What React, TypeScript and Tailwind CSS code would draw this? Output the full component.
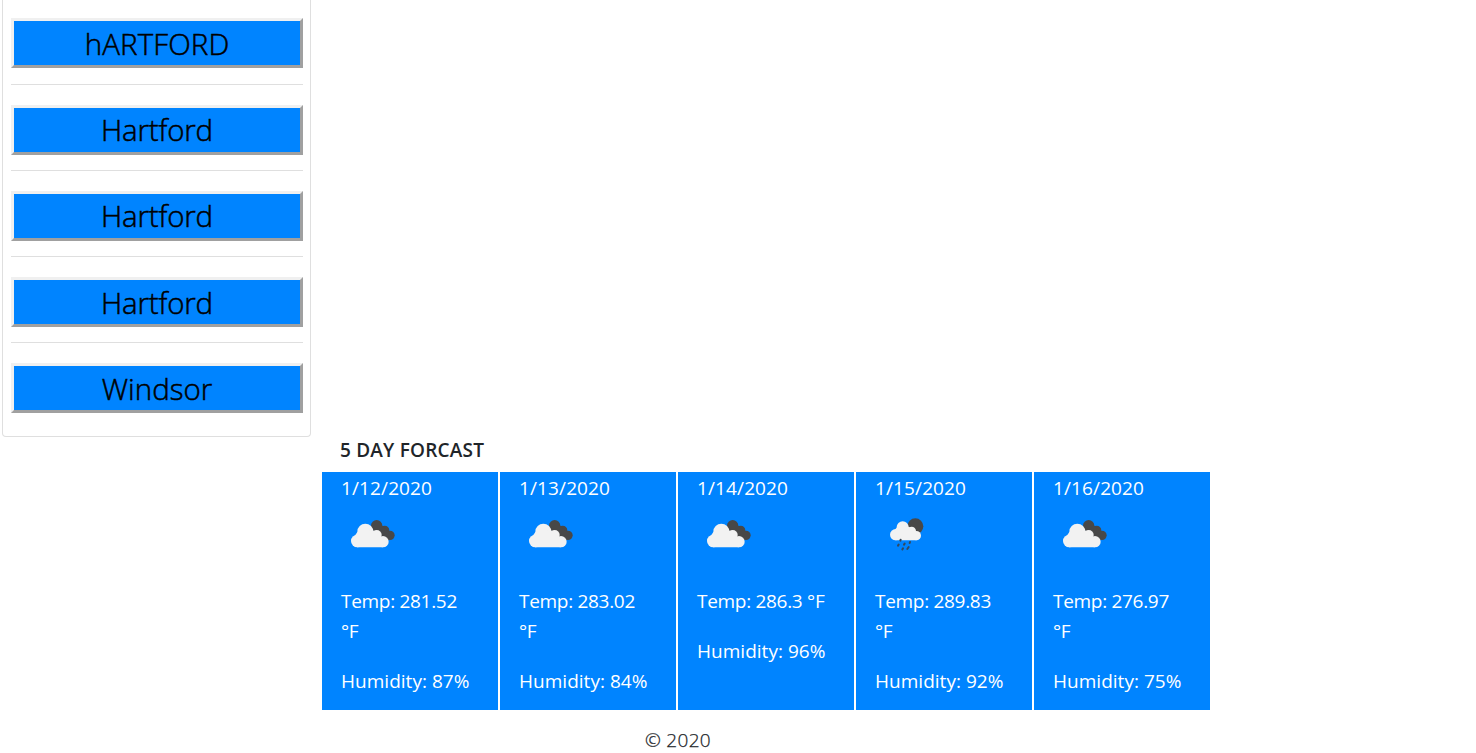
type Sky = 'clouds' | 'rain';

const cities = [
  { name: 'hARTFORD', button: 'mb-4 pt-px leading-[43px] tracking-[0.1px]' },
  { name: 'Hartford', button: 'mb-[15px] pb-px leading-[43px] tracking-[-0.2px]' },
  { name: 'Hartford', button: 'mb-[15px] pb-px leading-[43px] tracking-[-0.2px]' },
  { name: 'Hartford', button: 'mb-[15px] pt-px leading-[43px] tracking-[-0.2px]' },
  { name: 'Windsor', button: 'pt-px leading-[43px] tracking-[0px]' },
];

const forecast: { date: string; sky: Sky; temp: string; humidity: number }[] = [
  { date: '1/12/2020', sky: 'clouds', temp: '281.52', humidity: 87 },
  { date: '1/13/2020', sky: 'clouds', temp: '283.02', humidity: 84 },
  { date: '1/14/2020', sky: 'clouds', temp: '286.3', humidity: 96 },
  { date: '1/15/2020', sky: 'rain', temp: '289.83', humidity: 92 },
  { date: '1/16/2020', sky: 'clouds', temp: '276.97', humidity: 75 },
];

function CloudsIcon() {
  return (
    <svg viewBox="-1 -1 210 165" className="h-[55px] w-[70px]" aria-hidden="true">
      <g fill="#484848">
        <circle cx="109" cy="61" r="17" />
        <circle cx="133" cy="75" r="14" />
        <circle cx="149" cy="90" r="14" />
        <path d="M100 60h24l22 20v24h-18l-30-25z" />
      </g>
      <g fill="#f2f2f2">
        <circle cx="51" cy="107" r="19" />
        <circle cx="75" cy="79" r="24" />
        <circle cx="109" cy="89" r="15" />
        <circle cx="128" cy="109" r="17" />
        <path d="M50 126h78v-25l-30-26-47 5-8 12z" />
      </g>
    </svg>
  );
}

function RainIcon() {
  return (
    <svg viewBox="-1 -1 180 165" className="h-[55px] w-[60px]" aria-hidden="true">
      <circle cx="105" cy="63" r="24" fill="#484848" />
      <g fill="#f2f2f2">
        <circle cx="46" cy="88" r="17" />
        <circle cx="67" cy="66" r="18" />
        <circle cx="94" cy="77" r="13" />
        <circle cx="108" cy="91" r="14" />
        <path d="M45 105h64V84L86 64 48 68l-8 10z" />
      </g>
      <g stroke="#34495e" strokeWidth="6" strokeLinecap="round">
        <path d="M61 103l-1 3M55 118l-2 3M73 115l-2 3M89 110l-1 3M68 129l-2 3M85 125l-4 6" />
      </g>
    </svg>
  );
}

export default function App() {
  return (
    <div className="flex h-[753px] w-full items-start overflow-hidden bg-white font-['Open_Sans','Noto_Sans',sans-serif] text-[#212529]">
      <aside className="ml-[2px] h-[437px] w-[309px] shrink-0 rounded-b border border-t-0 border-[#dfdfdf] pt-[18px] pr-[7px] pl-2">
        {cities.map((city, i) => (
          <div key={i}>
            {i > 0 && <hr className="mb-5 border-[#dfdfdf]" />}
            <button
              className={`block h-[50px] w-[292px] border-[3px] border-t-[#f0f0f0] border-r-[#a0a0a0] border-b-[#a0a0a0] border-l-[#f0f0f0] bg-[#0084ff] text-[29.5px] font-light text-black [-webkit-text-stroke:0.5px_#000] ${city.button}`}
            >
              {city.name}
            </button>
          </div>
        ))}
      </aside>

      <main className="ml-[11px] w-[888px] shrink-0 pt-[435px]">
        <h5 className="h-[37px] pl-[18px] text-[19px] leading-[30px] font-semibold tracking-[0.2px]">5 DAY FORCAST</h5>
        <div className="grid h-[238px] grid-cols-5 gap-[2px]">
          {forecast.map((day) => (
            <section
              key={day.date}
              className="bg-[#0084ff] pr-[22px] pl-[19px] text-[19px] leading-[30px] text-white"
            >
              <p className="pt-[1px] tracking-[0.12px]">{day.date}</p>
              <div className="mt-[2px] h-[55px]">
                {day.sky === 'rain' ? (
                  <div className="ml-[5px]">
                    <RainIcon />
                  </div>
                ) : (
                  <div className="-ml-px">
                    <CloudsIcon />
                  </div>
                )}
              </div>
              <p className="mt-[26px] tracking-[-0.3px]">Temp: {day.temp} °F</p>
              <p className="mt-5 tracking-[0.02px]">Humidity: {day.humidity}%</p>
            </section>
          ))}
        </div>
        <footer className="pt-[15px] pl-[323px] text-[19px] leading-[30px] font-light tracking-[0.3px] [-webkit-text-stroke:0.25px_#212529]">
          © 2020
        </footer>
      </main>
    </div>
  );
}
